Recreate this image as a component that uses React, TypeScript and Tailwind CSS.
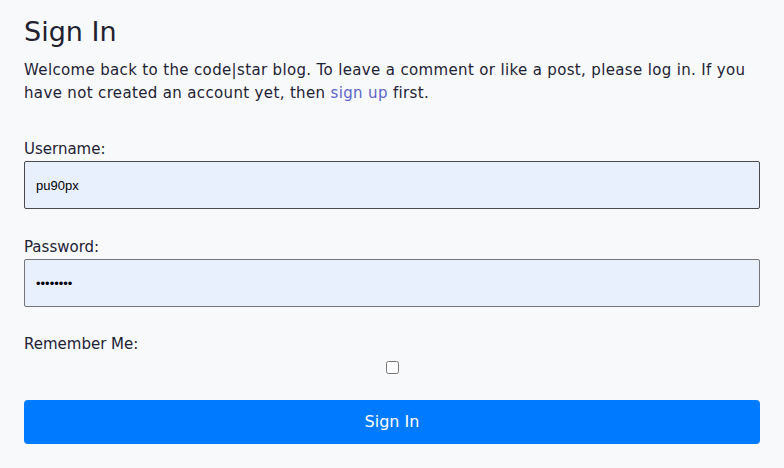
import React from "react";

export default function App() {
  return (
    <div
      className="min-h-[468px] w-full bg-[#f8f9fa] px-6 pt-[12px] text-[#1e2235]"
      style={{ fontFamily: '"DejaVu Sans", "Noto Sans", sans-serif' }}
    >
      <h1 className="text-[27px] leading-[40px] font-normal text-[#1f2130]">Sign In</h1>
      <p className="mt-[7px] text-[15px] leading-[23px] tracking-[0.35px]">
        Welcome back to the code|star blog. To leave a comment or like a post, please log in. If you
        have not created an account yet, then <a href="#" className="text-[#5b63c9]">sign up</a> first.
      </p>
      <form className="mt-[32px] flex flex-col" onSubmit={(e) => e.preventDefault()}>
        <label className="text-[15px] leading-[24px]">Username:</label>
        <input
          type="text"
          defaultValue="pu90px"
          className="h-[48px] w-full rounded-[2px] border border-[#4a4a4f] bg-[#e8f0fe] px-[11px] text-[13px] text-black outline-none"
          style={{ fontFamily: '"Liberation Sans", Arial, sans-serif' }}
        />
        <label className="mt-[26px] text-[15px] leading-[24px]">Password:</label>
        <input
          type="password"
          defaultValue="password"
          className="h-[48px] w-full rounded-[2px] border border-[#767676] bg-[#e8f0fe] px-[11px] text-[13px] text-black outline-none"
          style={{ fontFamily: '"Liberation Sans", Arial, sans-serif' }}
        />
        <label className="mt-[25px] text-[15px] leading-[24px]">Remember Me:</label>
        <div className="flex justify-center pt-[5px]">
          <input type="checkbox" className="h-[13px] w-[13px]" />
        </div>
        <button
          type="submit"
          className="mt-[26px] h-[44px] w-full rounded-[4px] bg-[#007bff] text-[16px] text-white"
        >
          Sign In
        </button>
      </form>
    </div>
  );
}
